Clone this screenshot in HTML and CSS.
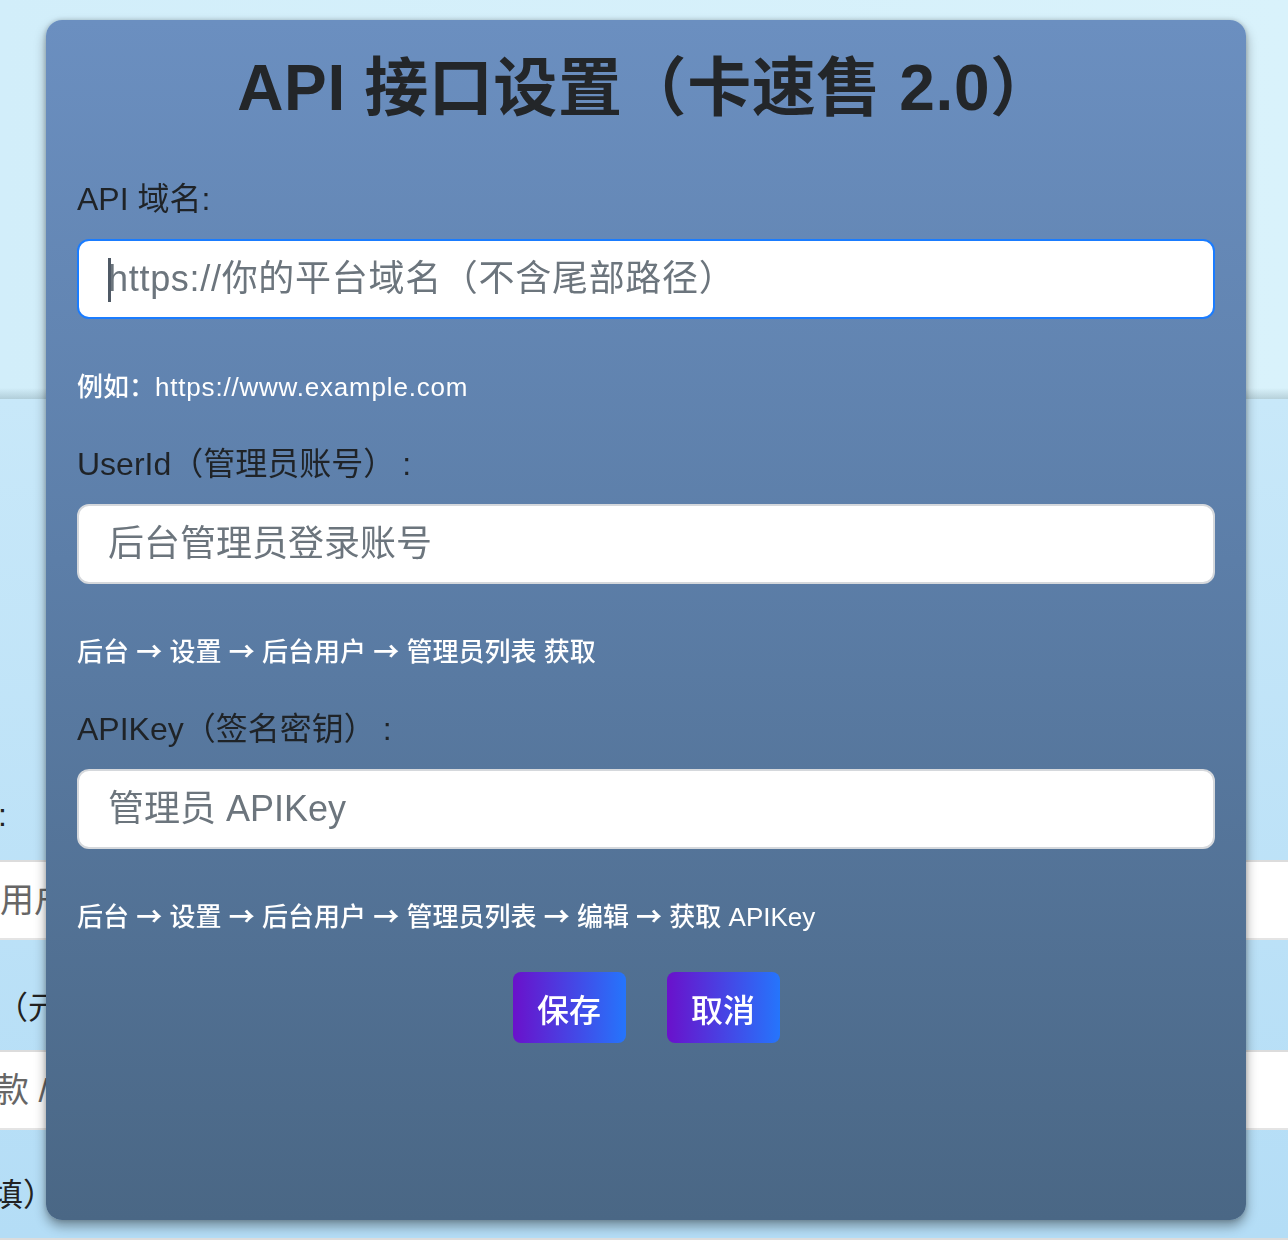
FILE: index.html
```html
<!DOCTYPE html>
<html lang="zh-CN">
<head>
<meta charset="utf-8">
<title>API 接口设置</title>
<link rel="stylesheet" href="styles.css">
</head>
<body>
<div class="page">
  <header class="hero"></header>
  <section class="bgform">
    <div class="bg-label row1">用户名:</div>
    <div class="bg-input row2">用户名或邮箱</div>
    <div class="bg-label row3">金额（元）：</div>
    <div class="bg-input row4">收款 / 付款说明</div>
    <div class="bg-label row5">备注（选填）</div>
    <div class="bg-input row6"></div>
  </section>
</div>

<div class="modal">
  <h2 class="modal-title">API 接口设置（卡速售 2.0）</h2>

  <div class="field">
    <label class="field-label">API 域名:</label>
    <div class="input-wrap">
      <input class="field-input is-focused" type="text" placeholder="https://你的平台域名（不含尾部路径）">
      <span class="caret"></span>
    </div>
    <p class="hint">例如：<span class="latin">https://www.example.com</span></p>
  </div>

  <div class="field">
    <label class="field-label">UserId（管理员账号）<span class="colon">:</span></label>
    <div class="input-wrap">
      <input class="field-input" type="text" placeholder="后台管理员登录账号">
    </div>
    <p class="hint">后台 <span class="arrow">→</span> 设置 <span class="arrow">→</span> 后台用户 <span class="arrow">→</span> 管理员列表 获取</p>
  </div>

  <div class="field">
    <label class="field-label">APIKey（签名密钥）<span class="colon">:</span></label>
    <div class="input-wrap">
      <input class="field-input" type="text" placeholder="管理员 APIKey">
    </div>
    <p class="hint">后台 <span class="arrow">→</span> 设置 <span class="arrow">→</span> 后台用户 <span class="arrow">→</span> 管理员列表 <span class="arrow">→</span> 编辑 <span class="arrow">→</span> 获取 APIKey</p>
  </div>

  <div class="actions">
    <button class="btn" type="button">保存</button>
    <button class="btn" type="button">取消</button>
  </div>
</div>
</body>
</html>
```

FILE: styles.css
```css
html, body {
  margin: 0;
  padding: 0;
  height: 1248px;
  overflow: hidden;
}

body {
  font-family: "Liberation Sans", "Noto Sans CJK SC", sans-serif;
  background: #abd8f5;
}

.page {
  display: flex;
  flex-direction: column;
}

.hero {
  height: 399px;
  background:
    linear-gradient(to bottom, rgba(0,0,0,0) 0, rgba(0,0,0,0) 388px, rgba(60,90,100,0.22) 399px),
    linear-gradient(to right, #d2eefa, #d9f2fb);
}

.bgform {
  padding-top: 396px;
  height: 1000px;
  background: linear-gradient(to bottom, #c8e8f9 0, #b4ddf6 60%, #a9d5f4 100%);
}

.bg-label {
  font-size: 32px;
  line-height: 40px;
  height: 40px;
  color: #222;
  white-space: nowrap;
}

.bg-input {
  height: 80px;
  box-sizing: border-box;
  background: #fff;
  border-top: 2px solid #dcdcdc;
  border-bottom: 2px solid #e4e4e4;
  font-size: 34px;
  line-height: 76px;
  color: #666;
  white-space: nowrap;
}

.row1 { text-indent: -98px; }
.row2 { margin-top: 25px; text-indent: 0; }
.row3 { margin-top: 48px; text-indent: -68px; }
.row4 { margin-top: 22px; text-indent: -39px; }
.row5 { margin-top: 45px; text-indent: -137px; }
.row6 { margin-top: 23px; }

/* Modal */
.modal {
  position: fixed;
  top: 20px;
  left: 46px;
  width: 1200px;
  height: 1200px;
  box-sizing: border-box;
  padding: 32px 31px 0;
  border-radius: 16px;
  background: linear-gradient(to bottom, #6b8fc0 0%, #5c7ea8 45%, #4a6785 100%);
  box-shadow: 0 6px 12px rgba(0, 0, 0, 0.38), 0 0 5px rgba(0, 0, 0, 0.18);
}

.modal-title {
  margin: 0 0 55px;
  font-size: 64px;
  line-height: 72px;
  font-weight: 600;
  letter-spacing: 0.6px;
  color: #232629;
  text-align: center;
}

.field + .field {
  margin-top: 39px;
}

.field-label {
  display: block;
  font-size: 32px;
  line-height: 40px;
  color: #1f2327;
  margin-bottom: 20px;
}

.colon {
  line-height: 1;
  margin-left: 7px;
}

.input-wrap {
  position: relative;
}

.field-input {
  display: block;
  width: 100%;
  height: 80px;
  box-sizing: border-box;
  margin: 0;
  padding: 0 29px;
  border: 2px solid #d5d8dc;
  border-radius: 12px;
  background: #fff;
  font-family: "Liberation Sans", "Noto Sans CJK SC", sans-serif;
  font-size: 36px;
  color: #333;
  outline: none;
}

.field-input::placeholder {
  color: #6c757d;
  opacity: 1;
}

.field-input.is-focused {
  border-color: #1a7cff;
}

.field-input.is-focused::placeholder {
  letter-spacing: 0.7px;
}

.caret {
  position: absolute;
  left: 31px;
  top: 19px;
  width: 3px;
  height: 44px;
  background: #4f5965;
}

.hint {
  margin: 50px 0 0;
  font-size: 26px;
  line-height: 36px;
  color: #ffffff;
  font-weight: 500;
}

.latin {
  letter-spacing: 0.8px;
}

.arrow {
  font-family: "Noto Sans CJK SC", sans-serif;
  font-weight: 700;
  line-height: 1;
}

.actions {
  margin-top: 37px;
  display: flex;
  justify-content: center;
  gap: 41px;
}

.btn {
  width: 113px;
  height: 71px;
  padding: 0;
  border: none;
  border-radius: 8px;
  background: linear-gradient(to right, #6a11cb, #2575fc);
  color: #fff;
  font-family: "Liberation Sans", "Noto Sans CJK SC", sans-serif;
  font-size: 32px;
  font-weight: 500;
  cursor: pointer;
}
```
